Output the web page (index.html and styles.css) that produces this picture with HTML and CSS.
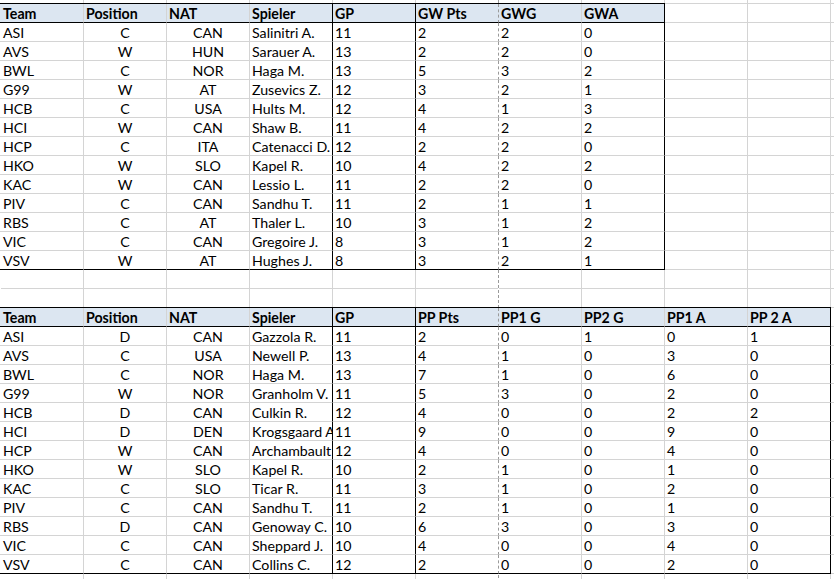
FILE: index.html
```html
<!DOCTYPE html>
<html lang="de">
<head>
<meta charset="utf-8">
<title>GW / PP Statistik</title>
<link rel="stylesheet" href="styles.css">
</head>
<body>
<div class="sheet">
  <div class="tbl t1">
    <div class="row hd"><div class="c">Team</div><div class="c">Position</div><div class="c">NAT</div><div class="c">Spieler</div><div class="c">GP</div><div class="c">GW Pts</div><div class="c">GWG</div><div class="c">GWA</div></div>
    <div class="row"><div class="c">ASI</div><div class="c">C</div><div class="c">CAN</div><div class="c">Salinitri A.</div><div class="c">11</div><div class="c">2</div><div class="c">2</div><div class="c">0</div></div>
    <div class="row"><div class="c">AVS</div><div class="c">W</div><div class="c">HUN</div><div class="c">Sarauer A.</div><div class="c">13</div><div class="c">2</div><div class="c">2</div><div class="c">0</div></div>
    <div class="row"><div class="c">BWL</div><div class="c">C</div><div class="c">NOR</div><div class="c">Haga M.</div><div class="c">13</div><div class="c">5</div><div class="c">3</div><div class="c">2</div></div>
    <div class="row"><div class="c">G99</div><div class="c">W</div><div class="c">AT</div><div class="c">Zusevics Z.</div><div class="c">12</div><div class="c">3</div><div class="c">2</div><div class="c">1</div></div>
    <div class="row"><div class="c">HCB</div><div class="c">C</div><div class="c">USA</div><div class="c">Hults M.</div><div class="c">12</div><div class="c">4</div><div class="c">1</div><div class="c">3</div></div>
    <div class="row"><div class="c">HCI</div><div class="c">W</div><div class="c">CAN</div><div class="c">Shaw B.</div><div class="c">11</div><div class="c">4</div><div class="c">2</div><div class="c">2</div></div>
    <div class="row"><div class="c">HCP</div><div class="c">C</div><div class="c">ITA</div><div class="c">Catenacci D.</div><div class="c">12</div><div class="c">2</div><div class="c">2</div><div class="c">0</div></div>
    <div class="row"><div class="c">HKO</div><div class="c">W</div><div class="c">SLO</div><div class="c">Kapel R.</div><div class="c">10</div><div class="c">4</div><div class="c">2</div><div class="c">2</div></div>
    <div class="row"><div class="c">KAC</div><div class="c">W</div><div class="c">CAN</div><div class="c">Lessio L.</div><div class="c">11</div><div class="c">2</div><div class="c">2</div><div class="c">0</div></div>
    <div class="row"><div class="c">PIV</div><div class="c">C</div><div class="c">CAN</div><div class="c">Sandhu T.</div><div class="c">11</div><div class="c">2</div><div class="c">1</div><div class="c">1</div></div>
    <div class="row"><div class="c">RBS</div><div class="c">C</div><div class="c">AT</div><div class="c">Thaler L.</div><div class="c">10</div><div class="c">3</div><div class="c">1</div><div class="c">2</div></div>
    <div class="row"><div class="c">VIC</div><div class="c">C</div><div class="c">CAN</div><div class="c">Gregoire J.</div><div class="c">8</div><div class="c">3</div><div class="c">1</div><div class="c">2</div></div>
    <div class="row"><div class="c">VSV</div><div class="c">W</div><div class="c">AT</div><div class="c">Hughes J.</div><div class="c">8</div><div class="c">3</div><div class="c">2</div><div class="c">1</div></div>
  </div>

  <div class="tbl t2">
    <div class="row hd"><div class="c">Team</div><div class="c">Position</div><div class="c">NAT</div><div class="c">Spieler</div><div class="c">GP</div><div class="c">PP Pts</div><div class="c">PP1 G</div><div class="c">PP2 G</div><div class="c">PP1 A</div><div class="c">PP 2 A</div></div>
    <div class="row"><div class="c">ASI</div><div class="c">D</div><div class="c">CAN</div><div class="c">Gazzola R.</div><div class="c">11</div><div class="c">2</div><div class="c">0</div><div class="c">1</div><div class="c">0</div><div class="c">1</div></div>
    <div class="row"><div class="c">AVS</div><div class="c">C</div><div class="c">USA</div><div class="c">Newell P.</div><div class="c">13</div><div class="c">4</div><div class="c">1</div><div class="c">0</div><div class="c">3</div><div class="c">0</div></div>
    <div class="row"><div class="c">BWL</div><div class="c">C</div><div class="c">NOR</div><div class="c">Haga M.</div><div class="c">13</div><div class="c">7</div><div class="c">1</div><div class="c">0</div><div class="c">6</div><div class="c">0</div></div>
    <div class="row"><div class="c">G99</div><div class="c">W</div><div class="c">NOR</div><div class="c">Granholm V.</div><div class="c">11</div><div class="c">5</div><div class="c">3</div><div class="c">0</div><div class="c">2</div><div class="c">0</div></div>
    <div class="row"><div class="c">HCB</div><div class="c">D</div><div class="c">CAN</div><div class="c">Culkin R.</div><div class="c">12</div><div class="c">4</div><div class="c">0</div><div class="c">0</div><div class="c">2</div><div class="c">2</div></div>
    <div class="row"><div class="c">HCI</div><div class="c">D</div><div class="c">DEN</div><div class="c">Krogsgaard A</div><div class="c">11</div><div class="c">9</div><div class="c">0</div><div class="c">0</div><div class="c">9</div><div class="c">0</div></div>
    <div class="row"><div class="c">HCP</div><div class="c">W</div><div class="c">CAN</div><div class="c">Archambault</div><div class="c">12</div><div class="c">4</div><div class="c">0</div><div class="c">0</div><div class="c">4</div><div class="c">0</div></div>
    <div class="row"><div class="c">HKO</div><div class="c">W</div><div class="c">SLO</div><div class="c">Kapel R.</div><div class="c">10</div><div class="c">2</div><div class="c">1</div><div class="c">0</div><div class="c">1</div><div class="c">0</div></div>
    <div class="row"><div class="c">KAC</div><div class="c">C</div><div class="c">SLO</div><div class="c">Ticar R.</div><div class="c">11</div><div class="c">3</div><div class="c">1</div><div class="c">0</div><div class="c">2</div><div class="c">0</div></div>
    <div class="row"><div class="c">PIV</div><div class="c">C</div><div class="c">CAN</div><div class="c">Sandhu T.</div><div class="c">11</div><div class="c">2</div><div class="c">1</div><div class="c">0</div><div class="c">1</div><div class="c">0</div></div>
    <div class="row"><div class="c">RBS</div><div class="c">D</div><div class="c">CAN</div><div class="c">Genoway C.</div><div class="c">10</div><div class="c">6</div><div class="c">3</div><div class="c">0</div><div class="c">3</div><div class="c">0</div></div>
    <div class="row"><div class="c">VIC</div><div class="c">C</div><div class="c">CAN</div><div class="c">Sheppard J.</div><div class="c">10</div><div class="c">4</div><div class="c">0</div><div class="c">0</div><div class="c">4</div><div class="c">0</div></div>
    <div class="row"><div class="c">VSV</div><div class="c">C</div><div class="c">CAN</div><div class="c">Collins C.</div><div class="c">12</div><div class="c">2</div><div class="c">0</div><div class="c">0</div><div class="c">2</div><div class="c">0</div></div>
  </div>
</div>
</body>
</html>
```

FILE: styles.css
```css
html, body {
  margin: 0;
  height: 100%;
}

body {
  font-family: Lato, "Liberation Sans", sans-serif;
  font-size: 14.2px;
  color: #000;
  background-color: #fff;
  background-image:
    linear-gradient(#fff, #fff),
    repeating-linear-gradient(to bottom, #9a9a9a 0 3px, transparent 3px 5px),
    linear-gradient(#fff, #fff),
    linear-gradient(to right, #d4d4d4 0 1px, transparent 1px),
    linear-gradient(to bottom, #d4d4d4 0 1px, transparent 1px);
  background-size:
    1px 100%,
    1px 100%,
    1px 100%,
    83px 100%,
    100% 19px;
  background-position:
    0 0,
    498px 0,
    498px 0,
    0 0,
    0 3px;
  background-repeat:
    no-repeat,
    no-repeat,
    no-repeat,
    repeat-x,
    repeat-y;
}

.sheet {
  padding-top: 3px;
}

.tbl {
  display: grid;
  width: max-content;
  border-top: 1px solid #000;
  background: #fff;
}

.t1 {
  grid-template-columns: 84px repeat(7, 83px);
}

.t2 {
  grid-template-columns: 84px repeat(9, 83px);
  margin-top: 37px;
}

.row {
  display: contents;
}

.c {
  box-sizing: border-box;
  height: 19px;
  padding: 1px 2px 0;
  line-height: 18px;
  white-space: nowrap;
  overflow: hidden;
  border-right: 1px solid #d4d4d4;
  border-bottom: 1px solid #d4d4d4;
}

.c:nth-child(1) {
  padding-left: 3px;
}

.c:nth-child(2),
.c:nth-child(3) {
  text-align: center;
}

.hd .c {
  text-align: left;
  font-weight: bold;
  background: #dce6f1;
  border-bottom-color: #000;
}

.c:nth-child(4),
.c:nth-child(5),
.c:last-child {
  border-right-color: #000;
}

.c:nth-child(6) {
  border-right: 1px dashed #9a9a9a;
}

.row:last-child .c {
  border-bottom-color: #000;
}
```
